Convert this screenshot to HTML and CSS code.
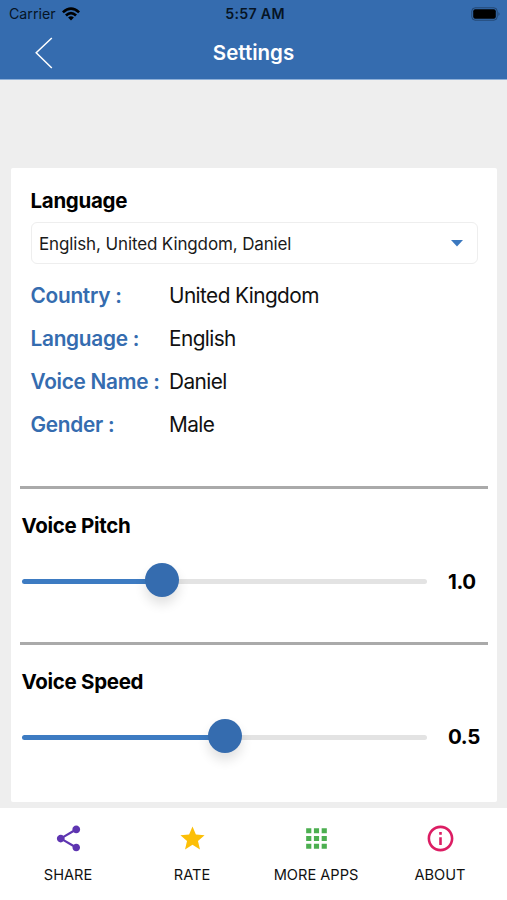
FILE: index.html
```html
<!DOCTYPE html>
<html lang="en">
<head>
<meta charset="utf-8">
<title>Settings</title>
<link rel="stylesheet" href="styles.css">
</head>
<body>
<header class="header">
  <div class="status">
    <div class="carrier"><span>Carrier</span>
      <svg class="wifi" width="18" height="14" viewBox="0 0 18 14"><path d="M0 4.4Q9-3.8 18 4.4L16.2 6.3Q9-.3 1.8 6.3ZM3 7.5Q9 2 15 7.5L13.1 9.4Q9 5.7 4.9 9.4ZM6.1 10.6Q9 8 11.9 10.6L9 13.6Z"/></svg>
    </div>
    <span class="time">5:57 AM</span>
    <svg class="battery" width="30" height="14" viewBox="0 0 30 14"><rect x=".8" y=".8" width="25.4" height="12.4" rx="3.4" fill="none" stroke="#000" stroke-opacity=".35"/><rect x="2.2" y="2.2" width="22.6" height="9.6" rx="2"/><path d="M27.5 5Q29.5 7 27.5 9Z" fill-opacity=".4"/></svg>
  </div>
  <div class="nav">
    <svg class="back" width="18" height="32" viewBox="0 0 18 32"><path d="M16.8 1 1.2 15.8 16.8 31" fill="none" stroke="#fff" stroke-width="1.5"/></svg>
    <h1>Settings</h1>
  </div>
</header>
<main class="card">
  <section class="language">
    <h2>Language</h2>
    <div class="select"><span>English, United Kingdom, Daniel</span><svg width="12" height="7" viewBox="0 0 12 7"><path d="M0 0H12L6 6.6Z" fill="#3b78bf"/></svg></div>
    <dl>
      <dt>Country :</dt><dd>United Kingdom</dd>
      <dt>Language :</dt><dd>English</dd>
      <dt>Voice Name :</dt><dd>Daniel</dd>
      <dt>Gender :</dt><dd>Male</dd>
    </dl>
  </section>
  <section class="voice">
    <h2>Voice Pitch</h2>
    <div class="control">
      <div class="slider"><div class="fill" style="width:140px"></div><div class="thumb"></div><div class="rest"></div></div>
      <span class="value">1.0</span>
    </div>
  </section>
  <section class="voice">
    <h2>Voice Speed</h2>
    <div class="control">
      <div class="slider"><div class="fill" style="width:203.5px"></div><div class="thumb"></div><div class="rest"></div></div>
      <span class="value">0.5</span>
    </div>
  </section>
</main>
<nav class="tabs">
  <div class="tab share"><svg width="31" height="31" viewBox="0 0 24 24"><path d="M18 16.08c-.76 0-1.44.3-1.96.77L8.91 12.7c.05-.23.09-.46.09-.7s-.04-.47-.09-.7l7.05-4.11c.54.5 1.25.81 2.04.81 1.66 0 3-1.34 3-3s-1.34-3-3-3-3 1.34-3 3c0 .24.04.47.09.7L8.04 9.81C7.5 9.31 6.79 9 6 9c-1.66 0-3 1.34-3 3s1.34 3 3 3c.79 0 1.5-.31 2.04-.81l7.12 4.16c-.05.21-.08.43-.08.65 0 1.61 1.31 2.92 2.92 2.92s2.92-1.31 2.92-2.92-1.31-2.92-2.92-2.92z"/></svg><span>SHARE</span></div>
  <div class="tab rate"><svg width="29" height="29" viewBox="0 0 24 24"><path d="M12 17.27 18.18 21l-1.64-7.03L22 9.24l-7.19-.61L12 2 9.19 8.63 2 9.24l5.46 4.73L5.82 21z"/></svg><span>RATE</span></div>
  <div class="tab more"><svg width="31" height="31" viewBox="0 0 24 24"><path d="M4 8h4V4H4v4zm6 12h4v-4h-4v4zm-6 0h4v-4H4v4zm0-6h4v-4H4v4zm6 0h4v-4h-4v4zm6-10v4h4V4h-4zm-6 4h4V4h-4v4zm6 6h4v-4h-4v4zm0 6h4v-4h-4v4z"/></svg><span>MORE APPS</span></div>
  <div class="tab about"><svg width="31" height="31" viewBox="0 0 24 24"><path d="M11 7h2v2h-2zm0 4h2v6h-2zm1-9C6.48 2 2 6.48 2 12s4.48 10 10 10 10-4.480 10-10S17.520 2 12 2zm0 18c-4.410 0-8-3.590-8-8s3.590-8 8-8 8 3.590 8 8-3.590 8-8 8z"/></svg><span>ABOUT</span></div>
</nav>
</body>
</html>
```
FILE: styles.css
```css
* { box-sizing: border-box; }
body { margin: 0; height: 900px; background: #eee; color: #000; font-family: Inter, "Liberation Sans", sans-serif; display: flex; flex-direction: column; overflow: hidden; }
h1, h2, dl, dd { margin: 0; }
svg { display: block; flex: none; }
.header { height: 80px; background: #356caf; border-bottom: 1px solid #8fb0d8; }
.status { height: 27px; display: grid; grid-template-columns: 1fr auto 1fr; align-items: center; padding: 0 6px 0 9px; font-size: 14.2px; color: #061425; }
.carrier { display: flex; align-items: center; gap: 6px; }
.time { font-weight: 600; letter-spacing: .3px; }
.battery { justify-self: end; }
.nav { height: 51px; display: grid; grid-template-columns: 1fr auto 1fr; align-items: center; }
.back { margin-left: 35px; }
h1 { color: #fff; font-size: 20.5px; line-height: 24px; font-weight: 600; }
.card { width: 486px; height: 634px; margin: 88px 0 6px 11px; background: #fff; border-radius: 2px; flex: none; padding: 0 9px; }
h2 { font-size: 20.5px; line-height: 24px; font-weight: 700; letter-spacing: -.3px; }
.language { height: 318px; padding: 21px 10.5px 0 10.5px; }
.select { height: 42px; margin-top: 9px; border: 1.5px solid #eee; border-radius: 6px; padding: 1px 14px 0 7.5px; display: flex; align-items: center; justify-content: space-between; font-size: 17px; letter-spacing: -.13px; color: #1a1a1a; }
dl { margin-top: 10px; display: grid; grid-template-columns: 138.5px 1fr; grid-auto-rows: 43.1px; align-items: center; font-size: 20.8px; white-space: nowrap; }
dt { color: #356caf; font-weight: 600; letter-spacing: -.27px; }
dd { color: #111; letter-spacing: -.58px; }
.voice { border-top: 3px solid #aaa; height: 155.5px; padding: 25px 0 0 1.5px; width: 468px; }
.control { display: flex; align-items: center; margin-top: 25px; height: 34px; gap: 21px; }
.slider { width: 405.5px; height: 34px; display: flex; align-items: center; }
.fill, .rest { height: 5px; margin-top: 3px; border-radius: 3px; }
.fill { background: #3d7bc2; margin-right: -17px; }
.rest { background: #e3e3e3; flex: 1; margin-left: -17px; }
.thumb { width: 34px; height: 34px; border-radius: 50%; background: #356caf; box-shadow: 0 7px 12px rgba(0,0,0,.12); z-index: 1; }
.value { font-size: 20.5px; font-weight: 700; letter-spacing: -.4px; margin-top: 2px; }
.tabs { height: 92px; background: #fff; display: grid; grid-template-columns: repeat(4, 124px); padding: 15px 0 0 6px; }
.tab { display: flex; flex-direction: column; align-items: center; font-size: 14.6px; line-height: 18px; color: #111; }
.tab svg { height: 31px; margin-bottom: 12px; }
.share svg { fill: #5e35b1; }
.rate svg { fill: #fcbf07; }
.more svg { fill: #4caf50; }
.about svg { fill: #dc1d63; }
```
